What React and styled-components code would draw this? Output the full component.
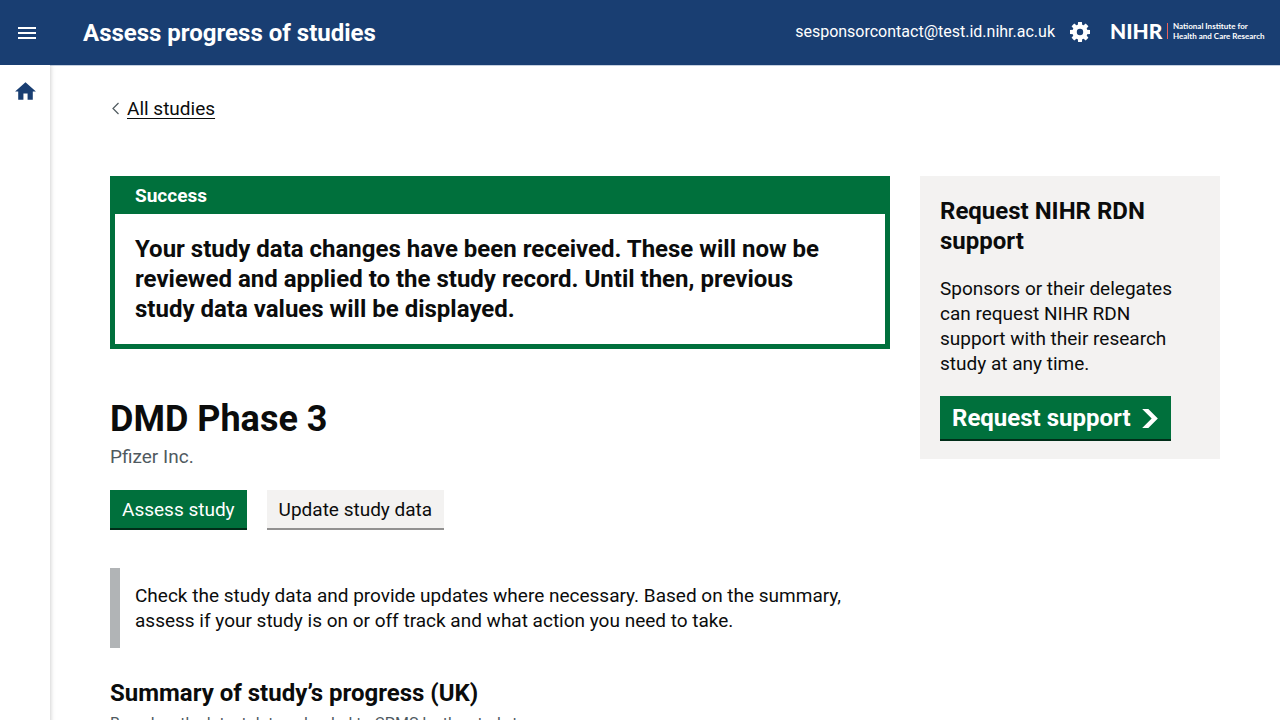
import React from "react";
import styled, { createGlobalStyle } from "styled-components";

const GlobalStyle = createGlobalStyle`
  *, *::before, *::after { box-sizing: border-box; }
  body {
    margin: 0;
    background: #ffffff;
    color: #0b0c0c;
    font-family: Roboto, "Liberation Sans", sans-serif;
    font-size: 19px;
    line-height: 25px;
  }
  h1, h2, h3, p { margin: 0; }
  button { font-family: inherit; cursor: pointer; }
`;

const Page = styled.div`
  display: flex;
  flex-direction: column;
  min-height: 100vh;
`;

const Header = styled.header`
  display: flex;
  align-items: center;
  height: 65px;
  padding: 0 15px;
  background: #193e72;
  color: #ffffff;
  box-shadow: 0 1px 0 #c5d0e0;
`;

const IconButton = styled.button`
  display: flex;
  padding: 0;
  border: 0;
  background: transparent;
  color: inherit;
`;

const ServiceName = styled.h2`
  flex: 1;
  margin-left: 44px;
  font-size: 24px;
  line-height: 30px;
  font-weight: 700;
`;

const Account = styled.div`
  display: flex;
  align-items: center;
  gap: 15px;
  padding-bottom: 1px;
  font-size: 16px;
  line-height: 20px;
`;

const Logo = styled.a`
  display: flex;
  align-items: center;
  gap: 5px;
  margin: 0 0 4px 20px;
  color: #ffffff;
  font-family: Lato, sans-serif;
  text-decoration: none;
`;

const LogoName = styled.span`
  width: 52px;
  font-size: 21px;
  line-height: 16px;
  font-weight: 900;
`;

const LogoRule = styled.span`
  flex: none;
  width: 1px;
  height: 16px;
  background: #e8605a;
`;

const LogoText = styled.span`
  width: 92px;
  font-size: 8px;
  line-height: 10px;
  font-weight: 700;
  white-space: nowrap;
`;

const Body = styled.div`
  display: flex;
  flex: 1;
`;

const Sidebar = styled.nav`
  flex: 0 0 50px;
  display: flex;
  justify-content: center;
  align-items: flex-start;
  padding-top: 14px;
  background: #ffffff;
  box-shadow: 0 0 5px rgba(0, 0, 0, 0.25);
  clip-path: inset(0 -10px 0 0);
`;

const HomeLink = styled.a`
  display: flex;
  color: #193e72;
`;

const Main = styled.div`
  flex: 1;
  min-width: 0;
  padding: 31px 60px 40px;
`;

const BackLink = styled.a`
  display: inline-flex;
  align-items: center;
  gap: 7px;
  color: #0b0c0c;
  text-decoration: none;
`;

const BackLabel = styled.span`
  text-decoration: underline;
  text-decoration-thickness: 1px;
  text-underline-offset: 3px;
`;

const Columns = styled.div`
  display: grid;
  grid-template-columns: minmax(0, 1fr) 300px;
  align-items: start;
  gap: 30px;
  margin-top: 55px;
`;

const Banner = styled.section`
  border: 5px solid #00703c;
  margin-bottom: 50px;
`;

const BannerTitle = styled.h2`
  padding: 2px 20px 6px;
  background: #00703c;
  color: #ffffff;
  font-size: 19px;
  line-height: 25px;
`;

const BannerText = styled.p`
  max-width: 740px;
  padding: 20px;
  font-size: 24px;
  line-height: 30px;
  font-weight: 700;
`;

const StudyTitle = styled.h1`
  font-size: 36px;
  line-height: 40px;
`;

const Sponsor = styled.p`
  margin-top: 5px;
  color: #505a5f;
`;

const Actions = styled.div`
  display: flex;
  gap: 20px;
  margin-top: 21px;
`;

const Button = styled.button`
  display: inline-flex;
  align-items: center;
  gap: 10px;
  padding: 7px 12px 6px;
  border: 0;
  background: ${(p) => (p.$secondary ? "#f3f2f1" : "#00703c")};
  color: ${(p) => (p.$secondary ? "#0b0c0c" : "#ffffff")};
  box-shadow: 0 2px 0 ${(p) => (p.$secondary ? "#929191" : "#002d18")};
  font-size: ${(p) => (p.$large ? "24px" : "19px")};
  line-height: ${(p) => (p.$large ? "30px" : "25px")};
  font-weight: ${(p) => (p.$large ? 700 : 400)};
`;

const Inset = styled.p`
  margin-top: 40px;
  padding: 15px;
  border-left: 10px solid #b1b4b6;
`;

const SectionTitle = styled.h3`
  margin-top: 30px;
  font-size: 24px;
  line-height: 30px;
`;

const Hint = styled.p`
  margin-top: 5px;
  color: #505a5f;
  font-size: 16px;
  line-height: 22px;
`;

const SupportCard = styled.aside`
  display: flex;
  flex-direction: column;
  align-items: flex-start;
  gap: 20px;
  padding: 20px;
  background: #f3f2f1;
`;

const SupportTitle = styled.h2`
  font-size: 24px;
  line-height: 30px;
`;

const MenuIcon = () => (
  <svg width="24" height="24" viewBox="0 0 24 24" fill="currentColor" aria-hidden="true">
    <path d="M3 18h18v-2H3v2zm0-5h18v-2H3v2zm0-7v2h18V6H3z" />
  </svg>
);

const HomeIcon = () => (
  <svg width="25" height="25" viewBox="0 0 24 24" fill="currentColor" aria-hidden="true">
    <path d="M10 20v-6h4v6h5v-8h3L12 3 2 12h3v8z" />
  </svg>
);

const teeth = [0, 45, 90, 135, 180, 225, 270, 315];

const GearIcon = () => (
  <svg width="20" height="20" viewBox="0 0 20 20" aria-hidden="true">
    <circle cx="10" cy="10" r="5.4" fill="none" stroke="currentColor" strokeWidth="4.4" />
    {teeth.map((angle) => (
      <path
        key={angle}
        d="M7.700 3.500 8.100 0h3.800l.4 3.500z"
        fill="currentColor"
        transform={`rotate(${angle} 10 10)`}
      />
    ))}
  </svg>
);

const BackIcon = () => (
  <svg width="10" height="13" viewBox="0 0 10 13" fill="none" stroke="#505a5f" aria-hidden="true">
    <path d="M8.500 1 3 6.500l5.500 5.500" strokeWidth="1.200" />
  </svg>
);

const StartIcon = () => (
  <svg width="18" height="19" viewBox="0 0 33 40" fill="currentColor" aria-hidden="true">
    <path d="M0 0h13l20 20-20 20H0l20-20z" />
  </svg>
);

export default function App() {
  return (
    <Page>
      <GlobalStyle />
      <Header>
        <IconButton type="button" aria-label="Menu">
          <MenuIcon />
        </IconButton>
        <ServiceName>Assess progress of studies</ServiceName>
        <Account>
          <span>sesponsorcontact@test.id.nihr.ac.uk</span>
          <IconButton type="button" aria-label="Settings">
            <GearIcon />
          </IconButton>
        </Account>
        <Logo href="#nihr">
          <LogoName>NIHR</LogoName>
          <LogoRule />
          <LogoText>
            National Institute for
            <br />
            Health and Care Research
          </LogoText>
        </Logo>
      </Header>
      <Body>
        <Sidebar>
          <HomeLink href="#home" aria-label="Home">
            <HomeIcon />
          </HomeLink>
        </Sidebar>
        <Main>
          <BackLink href="#studies">
            <BackIcon />
            <BackLabel>All studies</BackLabel>
          </BackLink>
          <Columns>
            <main>
              <Banner>
                <BannerTitle>Success</BannerTitle>
                <BannerText>
                  Your study data changes have been received. These will now be reviewed and
                  applied to the study record. Until then, previous study data values will be
                  displayed.
                </BannerText>
              </Banner>
              <StudyTitle>DMD Phase 3</StudyTitle>
              <Sponsor>Pfizer Inc.</Sponsor>
              <Actions>
                <Button type="button">Assess study</Button>
                <Button type="button" $secondary>
                  Update study data
                </Button>
              </Actions>
              <Inset>
                Check the study data and provide updates where necessary. Based on the summary,
                assess if your study is on or off track and what action you need to take.
              </Inset>
              <SectionTitle>Summary of study’s progress (UK)</SectionTitle>
              <Hint>Based on the latest data uploaded to CPMS by the study team.</Hint>
            </main>
            <SupportCard>
              <SupportTitle>Request NIHR RDN support</SupportTitle>
              <p>
                Sponsors or their delegates can request NIHR RDN support with their research
                study at any time.
              </p>
              <Button type="button" $large>
                Request support
                <StartIcon />
              </Button>
            </SupportCard>
          </Columns>
        </Main>
      </Body>
    </Page>
  );
}
